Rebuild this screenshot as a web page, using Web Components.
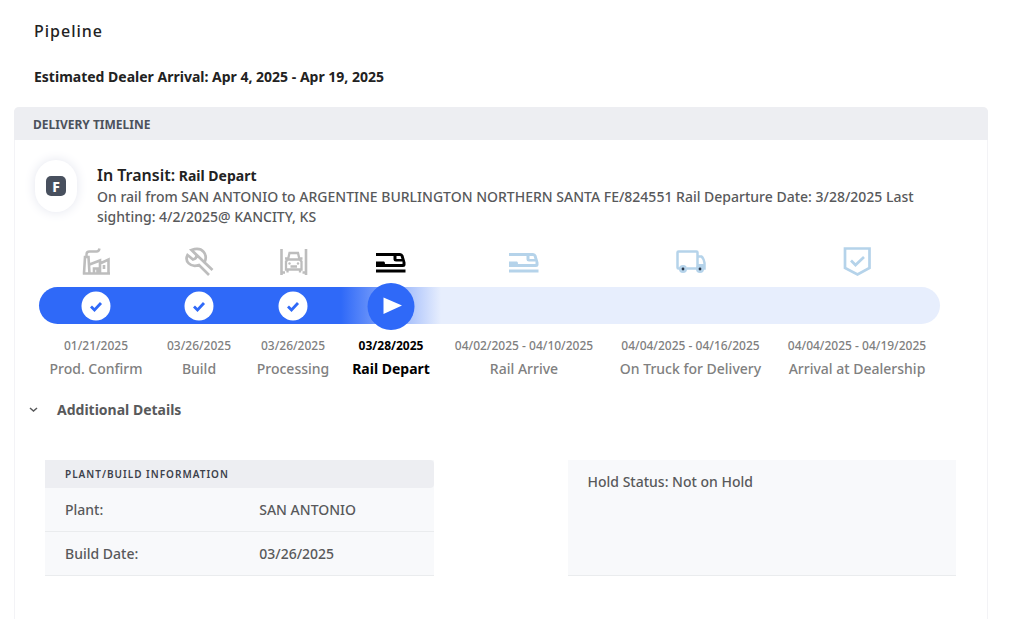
<!DOCTYPE html>
<html lang="en">
<head>
<meta charset="utf-8">
<meta name="viewport" content="width=device-width, initial-scale=1">
<title>Pipeline</title>
<style>
  body {
    margin: 0;
    background: #fff;
    color: #58595b;
    font: 500 14px/20px "Noto Sans", "Open Sans", sans-serif;
  }
</style>
</head>
<body>
<pipeline-page></pipeline-page>

<script>
const define = (name, html, setup) => {
  const template = document.createElement('template');
  template.innerHTML = html;
  customElements.define(name, class extends HTMLElement {
    connectedCallback() {
      if (this.shadowRoot) return;
      this.attachShadow({ mode: 'open' }).append(template.content.cloneNode(true));
      if (setup) setup(this, this.shadowRoot);
    }
  });
};

const icons = {
  factory: '<path d="M3 26.500L4 10H7.500L8.500 26.500M8.500 17.500L19 13.500V26.500M19 16.500L27.500 12.500V26.500M1.800 26.500H29M13 26V21.500H16.500V26M23 18V22" stroke-width="2.600"/><path d="M5.500 9.500V7.500Q5.500 4.500 8.500 4.500H15.500Q18 4.500 18.500 1.500" stroke-width="2.400"/>',
  wrench: '<path d="M7.500 3L12.500 8Q13 11.500 9 12.500L3.500 8C0.500 14 6 21 15 18L25 28M28.500 23L20.500 15.500C24 8 19 -1 7.500 3Z" stroke-width="2.700"/>',
  processing: '<path d="M3.500 2V28M28 2V28M3.500 25.500H7M24.500 25.500H28" stroke-width="2.600"/><path d="M10 12.500L11.500 6H20L21.500 12.500M8 22.500V14.500L10 12.500H21.500L23.500 14.500V22.500ZM9.500 22V25.500M22 22V25.500M7 11.500H9.500M22 11.500H24.500M12.500 19.500H19" stroke-width="2.300"/><circle cx="11.500" cy="16.500" r="1.200" fill="currentColor" stroke="none"/><circle cx="20" cy="16.500" r="1.200" fill="currentColor" stroke="none"/>',
  train: '<path d="M0 6H24Q26.500 6 27.500 8.500L29.500 15.500V18Q29.500 20 27 20H0V14.500H8Q9 14.500 9 17H26.500V14.500H20Q17.500 14.500 17.500 12.500V9H0ZM20.500 9V12H25.500L24.500 9ZM0 22.500H29.500V25.500H0Z" fill="currentColor" fill-rule="evenodd" stroke="none"/>',
  truck: '<path d="M4 21.500H2.500Q1.500 21.500 1.500 20.500V5.500Q1.500 4.500 2.500 4.500H20.500Q21.500 4.500 21.500 5.500V21.500H11M22 9.500H25.500Q27.500 11 28.500 16V21.500H26" stroke-width="2.500"/><path d="M22 17H28V21H22Z" fill="currentColor" stroke="none"/><circle cx="7" cy="22" r="4" fill="currentColor" stroke="none"/><circle cx="24" cy="22" r="4" fill="currentColor" stroke="none"/><circle cx="7" cy="22" r="1.400" fill="#28364a" stroke="none"/><circle cx="24" cy="22" r="1.400" fill="#28364a" stroke="none"/>',
  shield: '<path d="M3 1.500H27.500V21L15.500 27.500L3 21Z" stroke-width="2.700"/><path d="M9 13.500L13.500 18L22 10" stroke-width="2.700"/>'
};

define('step-icon', `
  <style>
    :host { display: block; width: 30px; height: 30px; }
    svg { display: block; width: 100%; height: 100%; overflow: visible; }
  </style>
  <svg viewBox="0 0 30 30" fill="none" stroke="currentColor" aria-hidden="true"></svg>
`, (host, root) => {
  root.querySelector('svg').innerHTML = icons[host.getAttribute('name')];
});

define('timeline-step', `
  <style>
    :host {
      --track: #e7eefd;
      display: flex; flex-direction: column; align-items: center;
      min-width: 0; color: #808080; white-space: nowrap; text-align: center;
    }
    :host([state="done"]) { --track: #2f69f8; }
    :host([state="current"]) { --track: linear-gradient(90deg, #2f69f8, #e7eefd); color: #000; font-weight: 700; }
    step-icon { color: #bdbdbd; }
    :host([state="current"]) step-icon { color: #000; }
    :host([state="next"]) step-icon { color: #b5d3ea; }
    .track {
      align-self: stretch; display: flex; align-items: center; justify-content: center;
      height: 37px; margin-top: 10px; background: var(--track);
    }
    :host(:first-child) .track { border-radius: 19px 0 0 19px; }
    :host(:last-child) .track { border-radius: 0 19px 19px 0; }
    svg { display: none; flex: none; }
    :host([state="done"]) .done, :host([state="current"]) .current { display: block; }
    .date { margin-top: 12px; font-size: 12px; line-height: 20px; }
    .label { margin-top: 3px; font-size: 14px; line-height: 20px; }
  </style>
  <div class="track">
    <svg class="done" width="30" height="30" viewBox="0 0 30 30" aria-hidden="true">
      <circle cx="15" cy="15" r="14.500" fill="#fff"/>
      <path d="M10 15.500L13.500 19L20 12" fill="none" stroke="#2f69f8" stroke-width="2.800"/>
    </svg>
    <svg class="current" width="48" height="48" viewBox="0 0 48 48" aria-hidden="true">
      <circle cx="24" cy="24.500" r="23.500" fill="#2f69f8"/>
      <path d="M16.500 15.500L35 23.500L16.500 32Z" fill="#fff"/>
    </svg>
  </div>
  <div class="date"></div>
  <div class="label"><slot></slot></div>
`, (host, root) => {
  const icon = document.createElement('step-icon');
  icon.setAttribute('name', host.getAttribute('icon'));
  root.querySelector('.track').before(icon);
  root.querySelector('.date').textContent = host.getAttribute('date');
  host.setAttribute('role', 'listitem');
});

define('delivery-timeline', `
  <style>
    :host { display: grid; grid-template-columns: 114fr 92fr 96fr 100fr 166fr 167fr 166fr; }
  </style>
  <slot></slot>
`, host => host.setAttribute('role', 'list'));

define('transit-status', `
  <style>
    :host { display: flex; align-items: flex-start; gap: 20px; }
    .badge {
      flex: none; display: grid; place-items: center; width: 42px; height: 52px;
      border-radius: 21px; background: #fff; box-shadow: 0 0 12px #e3e5ee;
    }
    .badge span {
      width: 20px; height: 20px; border-radius: 5px; background: #48505e; color: #fff;
      font-size: 14px; line-height: 21px; font-weight: 800; text-align: center;
    }
    .text { padding-top: 5px; }
    h3 { margin: 0 0 1px; color: #222; font-size: 14px; line-height: 20px; font-weight: 700; }
    b { font-size: 16px; font-weight: 600; }
    p { margin: 0; }
  </style>
  <div class="badge"><span>F</span></div>
  <div class="text">
    <h3><b>In Transit:</b> <slot name="stage"></slot></h3>
    <p><slot></slot></p>
  </div>
`);

define('details-toggle', `
  <style>
    :host { display: block; }
    button {
      display: flex; align-items: center; gap: 19px; padding: 0; border: 0; background: none;
      color: #58595b; font: inherit; font-weight: 700; cursor: pointer;
    }
    svg { display: block; }
  </style>
  <button type="button" aria-expanded="true">
    <svg width="9" height="9" viewBox="0 0 9 9" aria-hidden="true"><path d="M1 2L4.500 5L8 2" fill="none" stroke="#58595b" stroke-width="1.500"/></svg>
    <slot></slot>
  </button>
`, (host, root) => {
  const button = root.querySelector('button');
  button.addEventListener('click', () => {
    const open = button.getAttribute('aria-expanded') !== 'true';
    button.setAttribute('aria-expanded', open);
    host.nextElementSibling.hidden = !open;
  });
});

define('build-table', `
  <style>
    :host { display: block; }
    table { width: 100%; table-layout: fixed; border-collapse: separate; border-spacing: 0; background: #f8f9fb; }
    th, td { box-sizing: border-box; padding: 0 20px; text-align: left; font-weight: 500; }
    thead th {
      height: 28px; background: #edeef2; border-radius: 0 4px 4px 0; color: #3c414b;
      font-size: 10px; line-height: 16px; font-weight: 600; letter-spacing: 1px;
    }
    tbody th, tbody td { height: 44px; border-bottom: 1px solid #eaecee; }
  </style>
  <table>
    <thead><tr><th colspan="2">PLANT/BUILD INFORMATION</th></tr></thead>
    <tbody>
      <tr><th scope="row">Plant:</th><td>SAN ANTONIO</td></tr>
      <tr><th scope="row">Build Date:</th><td>03/26/2025</td></tr>
    </tbody>
  </table>
`);

define('hold-status', `
  <style>
    :host { display: block; padding: 12px 20px; background: #f8f9fb; border-bottom: 1px solid #eaecee; }
  </style>
  <slot></slot>
`);

define('timeline-card', `
  <style>
    :host {
      display: block; box-sizing: border-box; border: solid #f3f3f6; border-width: 0 1px;
      border-radius: 5px 5px 0 0;
    }
    h2 {
      margin: 0 -1px; padding: 8px 19px 5px; background: #edeef2; border-radius: 5px 5px 0 0;
      color: #4c515c; font-size: 12px; line-height: 20px; font-weight: 700;
    }
    .body { padding: 20px 31px 44px 20px; }
  </style>
  <h2><slot name="title"></slot></h2>
  <div class="body"><slot></slot></div>
`);

define('pipeline-page', `
  <style>
    :host { display: flex; flex-direction: column; box-sizing: border-box; min-height: 100vh; padding: 20px 36px 0 14px; }
    h1 { margin: 0 20px; color: #222; font-size: 16px; line-height: 22px; font-weight: 500; letter-spacing: 1px; }
    .arrival { margin: 25px 20px 20px; color: #222; font-weight: 700; }
    timeline-card { flex: 1; }
    delivery-timeline { margin: 20px 16px 0 4px; }
    details-toggle { margin: 21px 0 0 -6px; }
    .details { display: grid; grid-template-columns: 1fr 1fr; gap: 134px; margin: 40px 0 0 10px; }
    .details[hidden] { display: none; }
  </style>
  <h1>Pipeline</h1>
  <p class="arrival">Estimated Dealer Arrival: Apr 4, 2025 - Apr 19, 2025</p>
  <timeline-card>
    <span slot="title">DELIVERY TIMELINE</span>
    <transit-status>
      <span slot="stage">Rail Depart</span>
      On rail from SAN ANTONIO to ARGENTINE BURLINGTON NORTHERN SANTA FE/824551 Rail Departure Date: 3/28/2025 Last sighting: 4/2/2025@ KANCITY, KS
    </transit-status>
    <delivery-timeline>
      <timeline-step state="done" icon="factory" date="01/21/2025">Prod. Confirm</timeline-step>
      <timeline-step state="done" icon="wrench" date="03/26/2025">Build</timeline-step>
      <timeline-step state="done" icon="processing" date="03/26/2025">Processing</timeline-step>
      <timeline-step state="current" icon="train" date="03/28/2025">Rail Depart</timeline-step>
      <timeline-step state="next" icon="train" date="04/02/2025 - 04/10/2025">Rail Arrive</timeline-step>
      <timeline-step state="next" icon="truck" date="04/04/2025 - 04/16/2025">On Truck for Delivery</timeline-step>
      <timeline-step state="next" icon="shield" date="04/04/2025 - 04/19/2025">Arrival at Dealership</timeline-step>
    </delivery-timeline>
    <details-toggle>Additional Details</details-toggle>
    <div class="details">
      <build-table></build-table>
      <hold-status>Hold Status: Not on Hold</hold-status>
    </div>
  </timeline-card>
`);
</script>
</body>
</html>
